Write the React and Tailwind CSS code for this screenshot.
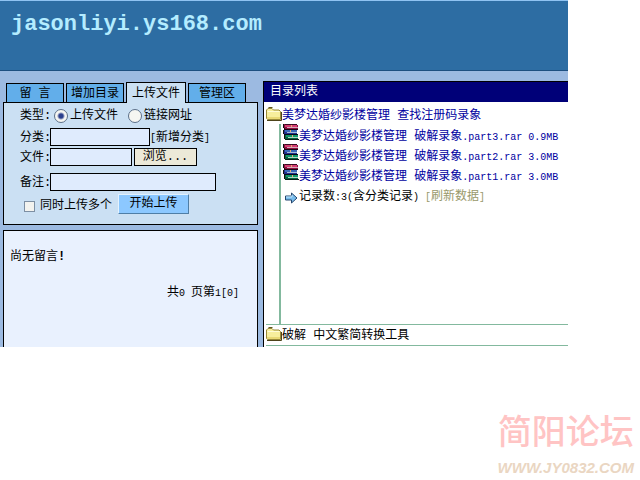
import React, { useState } from 'react';

const files = [
    { name: '美梦达婚纱影楼管理 破解录象', part: '.part3.rar 0.9MB' },
    { name: '美梦达婚纱影楼管理 破解录象', part: '.part2.rar 3.0MB' },
    { name: '美梦达婚纱影楼管理 破解录象', part: '.part1.rar 3.0MB' }
];

const tabs = ['留 言', '增加目录', '上传文件', '管理区'];

const labelClass = 'w-[30px] pt-0.5';
const inputClass = 'h-[18px] border border-black bg-[#dfebfd] px-1 text-xs outline-none';
const radioClass = 'mr-0.5 ml-1 size-[14px] shrink-0 appearance-none rounded-full border border-[#5b6f88] bg-[#f6f6f2] checked:bg-[radial-gradient(circle,#2c3f8c_2px,#f6f6f2_4px)]';

const FolderIcon = () => (
    <svg width="16" height="14" viewBox="0 0 16 14" className="shrink-0" aria-hidden="true">
        <path d="M.5 11.5V3L2 1.5h4L7.5 3H13l1.5 1.5v8H1.5Z" fill="#f7ee9c" stroke="#98893a" />
        <path d="M1.5 4.5h12" stroke="#fffcd8" />
        <path d="M1 10h13v2H1Z" fill="#e8d874" />
        <path d="M1 13.5h14.5V5" fill="none" stroke="#4d431a" />
        <path d="M2.5.5h4" stroke="#5f5420" />
    </svg>
);

const RarIcon = () => (
    <svg width="16" height="16" viewBox="0 0 16 16" className="shrink-0" shapeRendering="crispEdges" aria-hidden="true">
        <path d="M0 0h14v1h1v4H2V4H1V3H0Z" fill="#8c1040" />
        <path d="M2 0h12v1H2Z" fill="#3c0820" />
        <path d="M2 1h12v2H2Z" fill="#d43c70" />
        <path d="M4 3h11v1H4Z" fill="#d8a8b8" />
        <path d="M1 4h1v1h13v1H1Z" fill="#180410" />
        <path d="M0 6h14v4H1V9H0Z" fill="#20308c" />
        <path d="M2 6h12v2H2Z" fill="#3868b8" />
        <path d="M4 8h10v1H4Z" fill="#a8b8d8" />
        <path d="M0 9h1v1h14v1H1v-1H0Z" fill="#040818" />
        <path d="M1 11h14v4H2v-1H1Z" fill="#086040" />
        <path d="M3 11h12v2H3Z" fill="#109868" />
        <path d="M5 13h10v1H5Z" fill="#a8d8c0" />
        <path d="M1 14h1v1h14v1H2v-1H1Z" fill="#041c14" />
        <path d="M0 0h1v4H0ZM0 6h1v3H0ZM1 11h1v4H1Z" fill="#101010" />
        <path d="M8 1h1v2H8ZM7 6h1v2H7ZM9 11h1v2H9Z" fill="#e8b070" />
    </svg>
);

const ArrowIcon = () => (
    <svg width="13" height="12" viewBox="0 0 13 12" className="shrink-0" aria-hidden="true">
        <path d="M.5 4h6V1l5.5 5-5.5 5V8h-6Z" fill="#78bcec" stroke="#24466e" />
        <path d="M1 5h6V3" fill="none" stroke="#c4e6fc" />
    </svg>
);

const UploadPanel = () => {
    const [kind, setKind] = useState('file');

    return (
        <form onSubmit={(e) => e.preventDefault()} className="mx-[3px] mr-[5px] border border-black bg-[#cbe0f3] pl-4 pb-[9px]">
            <div className="flex h-6 items-center pt-0.5">
                <span className="w-[30px]">类型:</span>
                <label className="flex items-center">
                    <input type="radio" name="kind" checked={kind === 'file'} onChange={() => setKind('file')} className={radioClass} />
                    上传文件
                </label>
                <label className="ml-1.5 flex items-center">
                    <input type="radio" name="kind" checked={kind === 'link'} onChange={() => setKind('link')} className={radioClass} />
                    链接网址
                </label>
            </div>
            <div className="flex h-5 items-center">
                <label htmlFor="category" className={labelClass}>分类:</label>
                <input id="category" type="text" className={`${inputClass} w-[100px]`} />
                <a href="#category" className="pt-0.5"><span className="text-[10px]">[</span>新增分类<span className="text-[10px]">]</span></a>
            </div>
            <div className="flex h-5 items-center">
                <label htmlFor="file" className={labelClass}>文件:</label>
                <input id="file" type="text" className={`${inputClass} w-[82px]`} />
                <button type="button" className="ml-0.5 h-[18px] w-[63px] border border-black bg-[#ece9d8] leading-4">浏览...</button>
            </div>
            <div className="mt-1 flex h-[22px] items-center">
                <label htmlFor="remark" className={labelClass}>备注:</label>
                <input id="remark" type="text" className={`${inputClass} w-[166px]`} />
            </div>
            <div className="flex h-[22px] items-center">
                <label className="flex items-center pt-1">
                    <input type="checkbox" className="mr-[5px] ml-1 size-[11px] appearance-none border border-[#7d8fa3] bg-[#f3f3ef] checked:bg-[#2c3f8c]" />
                    同时上传多个
                </label>
                <button type="submit" className="ml-1.5 h-5 w-[71px] border border-t-[#e2f2ff] border-r-[#4f7ea6] border-b-[#4f7ea6] border-l-[#e2f2ff] bg-[#8cc8ff] leading-4">
                    开始上传
                </button>
            </div>
        </form>
    );
};

const Sidebar = () => (
    <aside className="flex w-[263px] shrink-0 flex-col pt-px">
        <div className="flex h-5 items-end gap-0.5 pl-1.5">
            {tabs.map((tab) => (
                <button
                    key={tab}
                    type="button"
                    className={`border border-b-0 border-black pt-0.5 ${
                        tab === '上传文件'
                            ? 'relative top-px h-[21px] w-[60px] bg-[#cbe0f3]'
                            : 'h-[19px] w-[58px] bg-[#62aeea]'
                    }`}
                >
                    {tab}
                </button>
            ))}
        </div>
        <UploadPanel />
        <div className="mt-[5px] mr-[5px] ml-[3px] grow border border-b-0 border-black bg-[#e9f1fe] px-1.5 pt-[18px]">
            <p>尚无留言<b>!</b></p>
            <p className="mt-5 pr-3 text-right">共<span className="text-[10px]">0 </span>页第<span className="text-[10px]">1[0]</span></p>
        </div>
    </aside>
);

const Directory = () => (
    <main className="flex grow flex-col border-l border-black bg-white leading-[26px]">
        <h2 className="h-[21px] border-t border-black bg-[#000078] pl-1.5 leading-5 text-white">目录列表</h2>
        <a href="#folder" className="mt-[5px] flex h-[17px] items-start pl-0.5 text-[#0000a0]">
            <FolderIcon />
            <span className="-mt-1">美梦达婚纱影楼管理 查找注册码录象</span>
        </a>
        <div className="ml-[15px] min-h-[200px] border-l-2 border-[#83b99e]">
            <ul>
                {files.map((file) => (
                    <li key={file.part}>
                        <a href="#file" className="flex h-5 items-start pl-0.5 text-[#0000a0]">
                            <RarIcon />
                            <span>{file.name}<span className="text-[10px]">{file.part}</span></span>
                        </a>
                    </li>
                ))}
            </ul>
            <div className="flex items-center gap-px pl-1">
                <ArrowIcon />
                <p>
                    记录数<span className="text-[10px]">:3(</span>含分类记录<span className="text-[10px]">) </span>
                    <a href="#refresh" className="text-[#99996b]"><span className="text-[10px]">[</span>刷新数据<span className="text-[10px]">]</span></a>
                </p>
            </div>
        </div>
        <a href="#tools" className="mb-px ml-0.5 flex h-[22px] items-start border-y border-[#83b99e] pt-0.5">
            <FolderIcon />
            <span className="-mt-1">破解 中文繁简转换工具</span>
        </a>
    </main>
);

const App = () => {
    return (
        <div className="relative min-h-screen bg-white pr-[72px] font-['Liberation_Mono','Noto_Sans_CJK_SC',monospace] text-xs whitespace-nowrap text-black">
            <header className="h-[71px] border-t border-b border-t-[#8fc3f2] border-b-[#1d4f80] bg-[#2d6da3] pt-2 pl-[11px]">
                <h1 className="text-[22px] leading-8 font-bold text-[#b4ecff]">jasonliyi.ys168.com</h1>
            </header>
            <div className="flex bg-[#9cbae1] pt-2.5">
                <Sidebar />
                <Directory />
            </div>

            {/* Forum mark in the page corner */}
            <div className="absolute right-1.5 bottom-0.5 text-center">
                <div className="font-['Noto_Sans_CJK_SC',sans-serif] text-[34px] leading-[56px] font-medium text-[#ffc4c4]">简阳论坛</div>
                <div className="font-['Liberation_Sans',sans-serif] text-[15px] leading-5 font-bold text-[#ead6c2] italic">WWW.JY0832.COM</div>
            </div>
        </div>
    );
};

export default App;
